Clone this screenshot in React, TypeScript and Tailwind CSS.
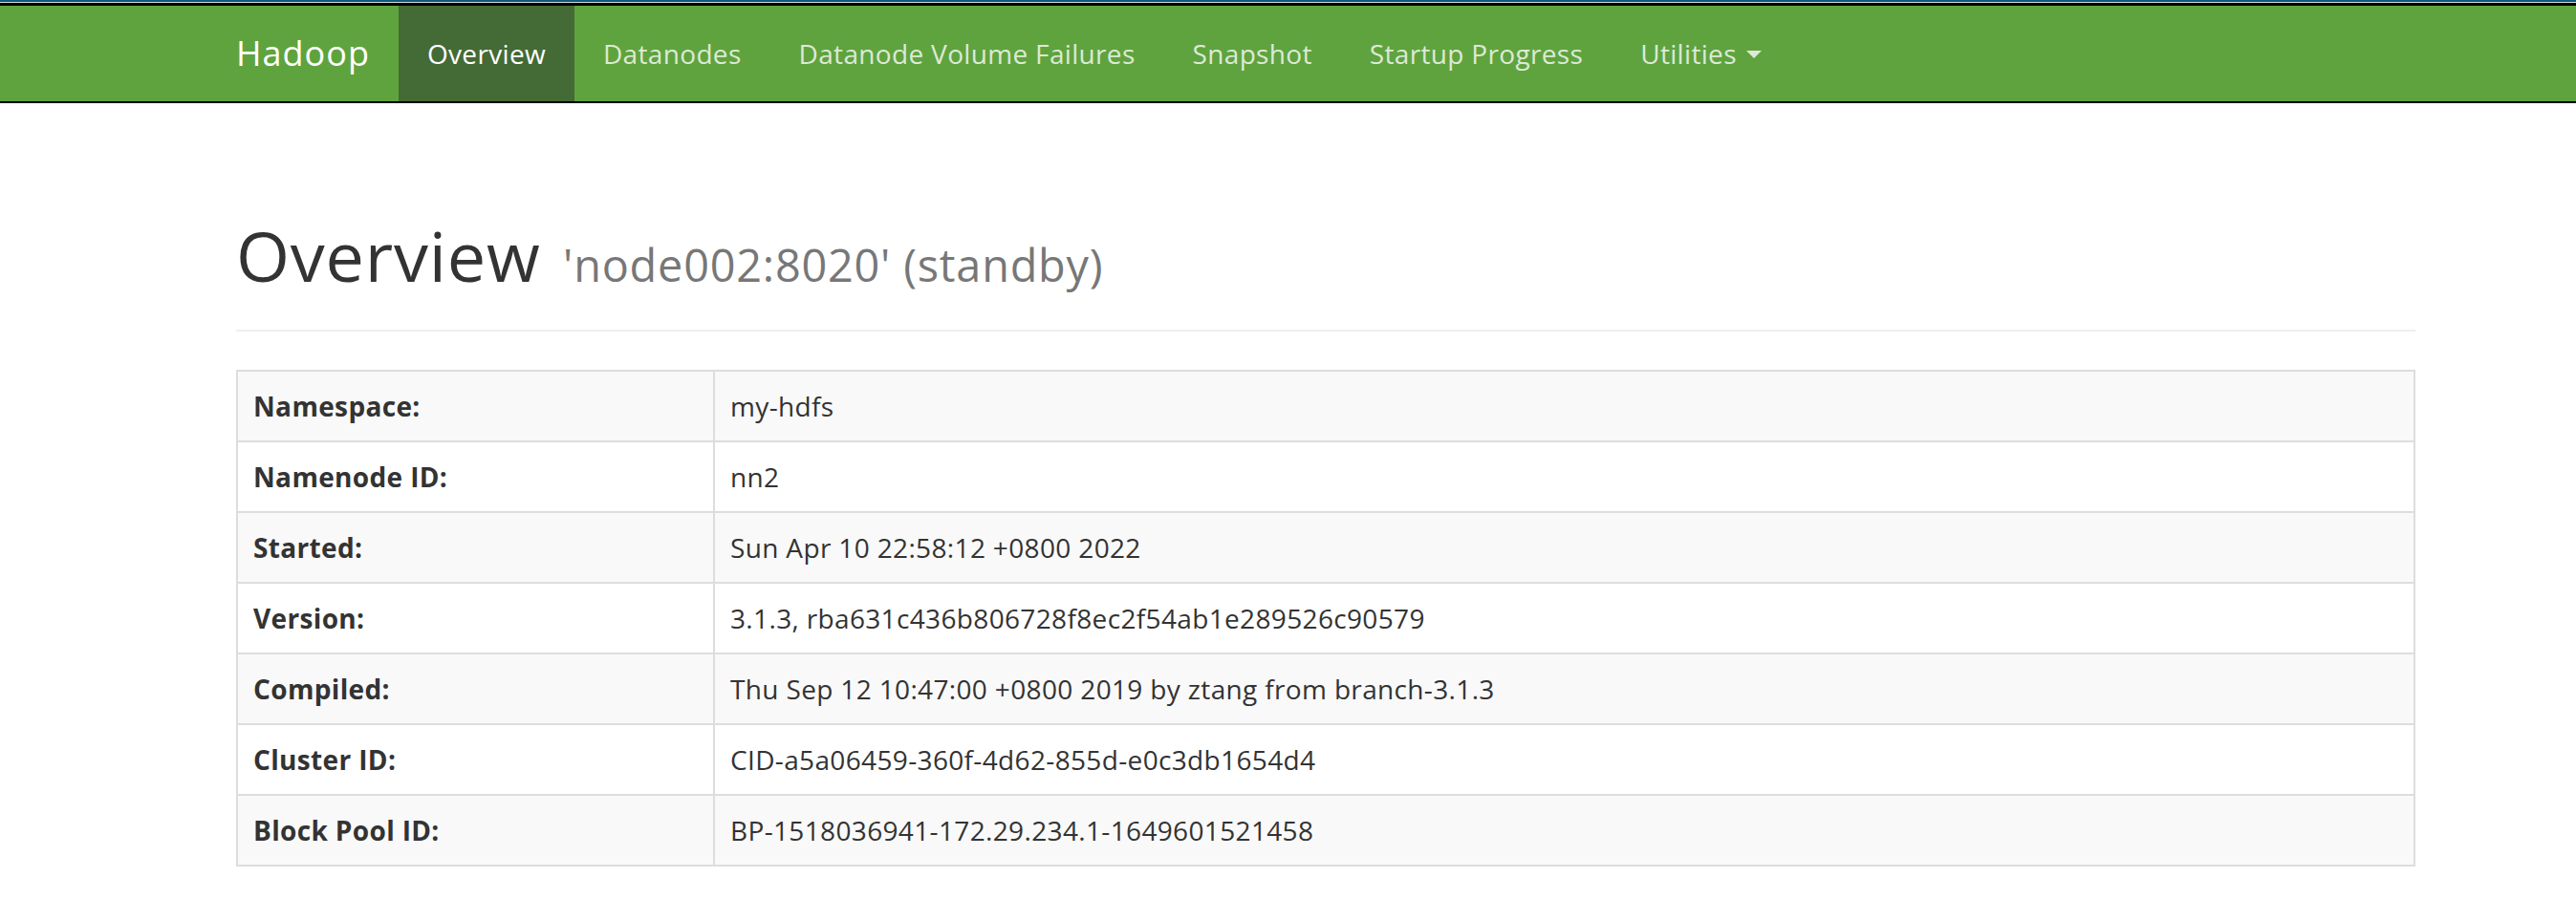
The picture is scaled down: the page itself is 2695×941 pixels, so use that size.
import React from 'react';

const navItems = [
  { label: 'Overview', active: true },
  { label: 'Datanodes' },
  { label: 'Datanode Volume Failures' },
  { label: 'Snapshot' },
  { label: 'Startup Progress' },
];

const rows: [string, string][] = [
  ['Namespace:', 'my-hdfs'],
  ['Namenode ID:', 'nn2'],
  ['Started:', 'Sun Apr 10 22:58:12 +0800 2022'],
  ['Version:', '3.1.3, rba631c436b806728f8ec2f54ab1e289526c90579'],
  ['Compiled:', 'Thu Sep 12 10:47:00 +0800 2019 by ztang from branch-3.1.3'],
  ['Cluster ID:', 'CID-a5a06459-360f-4d62-855d-e0c3db1654d4'],
  ['Block Pool ID:', 'BP-1518036941-172.29.234.1-1649601521458'],
];

function NavBar() {
  return (
    <div>
      <div className="h-[2px] bg-[#0f5a7c]" />
      <div className="h-px bg-[#d3dadd]" />
      <nav className="bg-[#5fa33e] border-t-[3px] border-b-2 border-black">
        <div className="flex pl-[217px] h-[100px]">
          <a className="px-[30px] py-[30px] text-[36px] leading-[40px] tracking-[1px] text-white">Hadoop</a>
          <ul className="flex">
            {navItems.map(item => (
              <li key={item.label}>
                <a
                  className={
                    item.active
                      ? 'block px-[30px] py-[30px] text-[28px] leading-[40px] tracking-[0.33px] text-white bg-[#446a35]'
                      : 'block px-[30px] py-[30px] text-[28px] leading-[40px] tracking-[0.33px] text-[#dde9d6]'
                  }
                >
                  {item.label}
                </a>
              </li>
            ))}
            <li>
              <a className="flex items-center px-[30px] py-[30px] text-[28px] leading-[40px] tracking-[0.33px] text-[#dde9d6]">
                Utilities
                <span className="ml-[10px] mt-[2px] w-0 h-0 border-x-[8px] border-x-transparent border-t-[8px] border-t-[#dde9d6]" />
              </a>
            </li>
          </ul>
        </div>
      </nav>
    </div>
  );
}

export default function App() {
  return (
    <div
      className="min-h-screen bg-white text-[#333]"
      style={{ fontFamily: '"Open Sans", "Noto Sans", sans-serif' }}
    >
      <NavBar />
      <div className="ml-[247px] w-[2280px]">
        <div className="mt-[120px] mb-[40px] pb-[18px] border-b-2 border-[#eee]">
          <h1 className="text-[72px] leading-[79px] font-normal tracking-[0.8px] mb-[20px]">
            Overview{' '}
            <small className="ml-[4px] text-[46.8px] leading-none text-[#777] font-normal tracking-[0.8px]">
              'node002:8020' (standby)
            </small>
          </h1>
        </div>

        <div className="border-2 border-[#ddd] tracking-[0.35px]">
          {rows.map(([label, value], i) => (
            <div
              key={label}
              className={
                'grid grid-cols-[499px_1fr] text-[28px] leading-[40px] ' +
                (i % 2 === 0 ? 'bg-[#f9f9f9] ' : 'bg-white ') +
                (i > 0 ? 'border-t-2 border-[#ddd]' : '')
              }
            >
              <div className="p-[16px] font-bold border-r-2 border-[#ddd]">{label}</div>
              <div className="p-[16px]">{value}</div>
            </div>
          ))}
        </div>
      </div>
    </div>
  );
}
